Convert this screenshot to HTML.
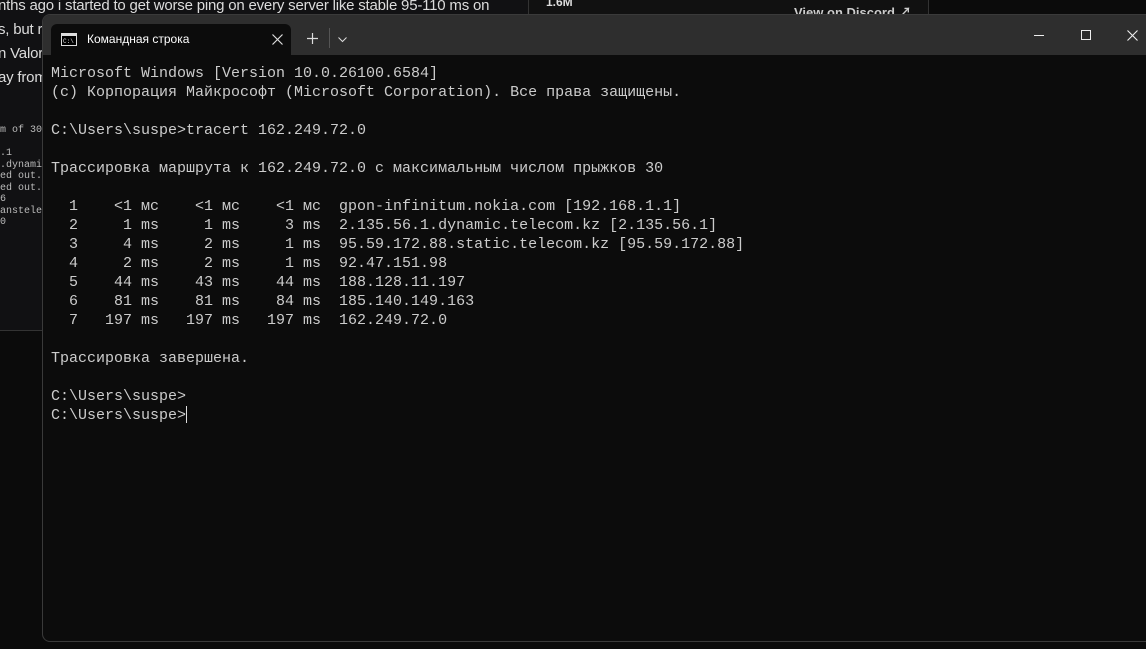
<!DOCTYPE html>
<html><head><meta charset="utf-8"><style>
html,body{margin:0;padding:0;width:1146px;height:649px;overflow:hidden;background:#0b0b0b;position:relative;font-family:"Liberation Sans","Noto Sans CJK SC",sans-serif}
.bgtop{position:absolute;left:0;top:0;width:528px;height:330px;background:#111113;border-bottom:1px solid #333}
.bgtxt{position:absolute;left:-2px;color:#dcdcdc;font-size:15px;white-space:nowrap;letter-spacing:-0.2px}
.small{position:absolute;left:0;color:#bbb;font:10px "Liberation Mono",monospace;line-height:11.5px;white-space:pre}
.panel{position:absolute;left:528px;top:0;width:399px;height:14px;background:#111;border-left:1px solid #333;border-right:1px solid #333}
.win{position:absolute;left:42px;top:14px;width:1110px;height:626px;background:#0c0c0c;border:1px solid #3a3a3a;border-radius:8px 0 0 8px;overflow:hidden}
.title{position:absolute;left:0;top:0;right:0;height:40px;background:#2e2e2e}
.tab{position:absolute;left:8px;top:9px;width:240px;height:31px;background:#0c0c0c;border-radius:6px 6px 0 0}
.tab .t{position:absolute;left:36px;top:8px;color:#fff;font-size:12px}
.term{position:absolute;left:8px;top:49px;color:#cccccc;font:15px/19px "Liberation Mono","DejaVu Sans Mono",monospace;white-space:pre}
</style></head><body>
<div class="bgtop"></div>
<div class="bgtxt" style="top:-3px">nths ago i started to get worse ping on every server like stable 95-110 ms on</div>
<div class="bgtxt" style="top:21px">s, but r</div>
<div class="bgtxt" style="top:45px">n Valora</div>
<div class="bgtxt" style="top:69px">ay from</div>
<div class="small" style="top:125px">m of 30</div>
<div class="small" style="top:148px">.1
.dynami
ed out.
ed out.
6
anstele
0</div>
<div class="panel"><span style="position:absolute;left:17px;top:-5px;color:#ddd;font-size:12px;font-weight:bold">1.6M</span><span style="position:absolute;left:265px;top:2px;color:#ccc;font-size:13px;font-weight:bold">View on Discord ↗</span></div>
<div class="win">
 <div class="title">
  <div class="tab">
   <svg style="position:absolute;left:10px;top:9px" width="16" height="13" viewBox="0 0 16 13"><rect x="0.5" y="0.5" width="15" height="12" fill="#000" stroke="#ddd"/><rect x="1" y="1" width="14" height="2" fill="#ddd"/><text x="2" y="10" font-size="6" fill="#ddd" font-family="Liberation Mono">C:\</text></svg>
   <span class="t">Командная строка</span>
   <svg style="position:absolute;left:221px;top:10px" width="11" height="11" viewBox="0 0 11 11"><path d="M0.5 0.5L10.5 10.5M10.5 0.5L0.5 10.5" stroke="#ddd" stroke-width="1.2"/></svg>
  </div>
  <svg style="position:absolute;left:264px;top:18px" width="11" height="11"><path d="M5.5 0V11M0 5.5H11" stroke="#ddd" stroke-width="1.2"/></svg>
  <div style="position:absolute;left:286px;top:13px;width:1px;height:20px;background:#555"></div>
  <svg style="position:absolute;left:295px;top:22px" width="9" height="6"><path d="M0.5 0.5L4.5 4.5L8.5 0.5" stroke="#ddd" fill="none"/></svg>
  <div style="position:absolute;left:991px;top:20px;width:10px;height:1px;background:#eee"></div>
  <div style="position:absolute;left:1038px;top:15px;width:8px;height:8px;border:1px solid #eee"></div>
  <svg style="position:absolute;left:1084px;top:15px" width="11" height="11"><path d="M0.5 0.5L10.5 10.5M10.5 0.5L0.5 10.5" stroke="#eee" stroke-width="1.1"/></svg>
 </div>
 <div class="term">Microsoft Windows [Version 10.0.26100.6584]
(c) Корпорация Майкрософт (Microsoft Corporation). Все права защищены.

C:\Users\suspe>tracert 162.249.72.0

Трассировка маршрута к 162.249.72.0 с максимальным числом прыжков 30

  1    &lt;1 мс    &lt;1 мс    &lt;1 мс  gpon-infinitum.nokia.com [192.168.1.1]
  2     1 ms     1 ms     3 ms  2.135.56.1.dynamic.telecom.kz [2.135.56.1]
  3     4 ms     2 ms     1 ms  95.59.172.88.static.telecom.kz [95.59.172.88]
  4     2 ms     2 ms     1 ms  92.47.151.98
  5    44 ms    43 ms    44 ms  188.128.11.197
  6    81 ms    81 ms    84 ms  185.140.149.163
  7   197 ms   197 ms   197 ms  162.249.72.0

Трассировка завершена.

C:\Users\suspe>
C:\Users\suspe><span style="display:inline-block;width:1px;height:17px;background:#ddd;vertical-align:-4px"></span></div>
</div>
</body></html>
